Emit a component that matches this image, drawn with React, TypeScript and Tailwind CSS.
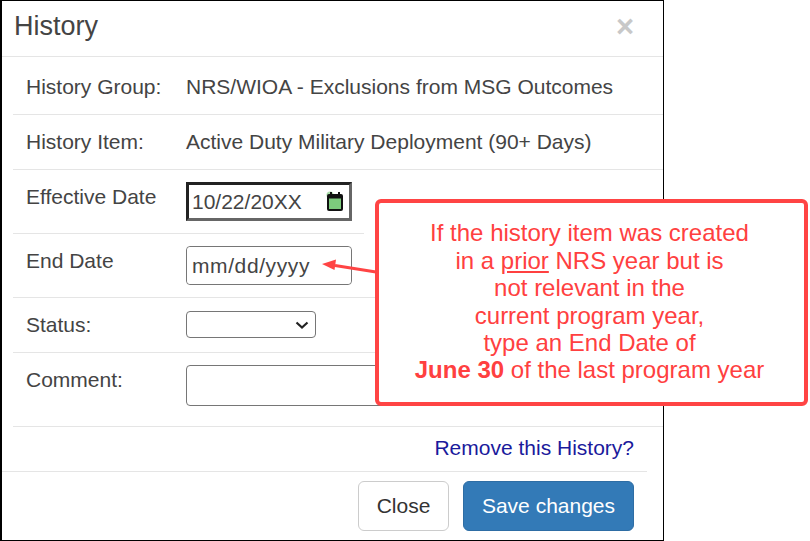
const inputBase = "block w-full h-full bg-white text-[21px] text-[#444] outline-none font-['Liberation_Sans',Arial,sans-serif]";

const Row = ({ label, children, className = "" }: { label: string; children: React.ReactNode; className?: string }) => (
  <div className={`flex border-b border-[#e5e5e5] pl-[13px] ${className}`}>
    <div className="w-[160px] shrink-0 leading-[30px]">{label}</div>
    {children}
  </div>
);

const CalendarIcon = () => (
  <svg width="18" height="21" viewBox="0 0 18 21" className="absolute right-[5px] top-[6px]">
    <circle cx="4" cy="4" r="3.5" fill="#a8dca8" />
    <rect x="1" y="3" width="16" height="17" rx="2" fill="#111" />
    <rect x="4" y="1" width="2" height="4" fill="#111" />
    <rect x="12" y="1" width="2" height="4" fill="#111" />
    <rect x="3" y="7.5" width="12" height="10.5" fill="#7ccb7c" />
  </svg>
);

export default function App() {
  return (
    <div className="relative w-[810px] h-[541px] bg-white overflow-hidden font-['Liberation_Sans',Arial,sans-serif] text-[21px] text-[#444]">
      {/* Modal */}
      <div className="w-[664px] h-[541px] border border-l-2 border-black">
        <div className="flex justify-between h-[56px] border-b border-[#e5e5e5] pl-[12px] pr-[29px]">
          <h4 className="text-[27px] leading-[50px] text-[#444]">History</h4>
          <span className="text-[31px] font-bold leading-[52px] text-[#c8c8c8]">×</span>
        </div>

        <div className="flex items-center h-[58px] pt-[2px] border-b border-[#e5e5e5] ml-[11px] pl-[13px]">
          <div className="w-[160px] shrink-0">History Group:</div>
          <div>NRS/WIOA - Exclusions from MSG Outcomes</div>
        </div>
        <div className="flex items-center h-[55px] border-b border-[#e5e5e5] ml-[11px] pl-[13px]">
          <div className="w-[160px] shrink-0">History Item:</div>
          <div>Active Duty Military Deployment (90+ Days)</div>
        </div>

        <div className="ml-[11px]">
          <Row label="Effective Date" className="h-[64px] pt-[12px] w-[351px]">
            <div className="relative w-[166px] h-[39px] border-[3px] border-t-[#222] border-l-[#222] border-r-[#666] border-b-[#666]">
              <input readOnly value="10/22/20XX" className={`${inputBase} pl-[3px] pr-[30px]`} />
              <CalendarIcon />
            </div>
          </Row>
          <Row label="End Date" className="h-[64px] pt-[12px]">
            <div className="w-[166px] h-[39px] border border-[#767676] rounded-[4px]">
              <input readOnly value="mm/dd/yyyy" className={`${inputBase} rounded-[4px] pl-[5px] tracking-[0.6px]`} />
            </div>
          </Row>
          <Row label="Status:" className="h-[55px] pt-[12px]">
            <div className="relative w-[130px] h-[27px] mt-px">
              <select className="appearance-none block w-full h-full border border-[#767676] rounded-[4px] bg-white text-[16px] text-black">
                <option></option>
              </select>
              <svg width="14" height="8" viewBox="0 0 14 8" className="absolute left-[109px] top-[10px]">
                <path d="M1.5 1.5 L7 6.5 L12.5 1.5" stroke="#222" strokeWidth="2.2" fill="none" />
              </svg>
            </div>
          </Row>
          <Row label="Comment:" className="h-[74px] pt-[12px]">
            <textarea readOnly className="w-[452px] h-[41px] border border-[#767676] rounded-[4px] resize-none outline-none" />
          </Row>
        </div>

        <div className="flex items-center justify-end h-[45px] w-[645px] pr-[13px] pb-[3px] border-b border-[#e5e5e5]">
          <a className="text-[#1a1a9c]">Remove this History?</a>
        </div>

        <div className="flex justify-end gap-[14px] w-[645px] pr-[13px] pt-[9px]">
          <button className="w-[91px] h-[50px] bg-white border border-[#ccc] rounded-[6px] text-[#333]">Close</button>
          <button className="w-[171px] h-[50px] bg-[#337ab7] border border-[#2e6da4] rounded-[6px] text-white">Save changes</button>
        </div>
      </div>

      {/* Callout */}
      <div className="absolute left-[375px] top-[199px] w-[433px] h-[207px] flex flex-col items-center justify-center pr-[4px] pb-[2px] border-4 border-[#ff4444] rounded-[6px] bg-white text-[24px] leading-[27.4px] text-[#ff4040]">
        <div>If the history item was created</div>
        <div>in a <span className="underline">prior</span> NRS year but is</div>
        <div>not relevant in the</div>
        <div>current program year,</div>
        <div>type an End Date of</div>
        <div><b>June 30</b> of the last program year</div>
      </div>

      {/* Arrow */}
      <svg width="56" height="16" viewBox="0 0 56 16" className="absolute left-[321px] top-[258px]">
        <path d="M55 14 L14 7.5" stroke="#ff4444" strokeWidth="3" fill="none" />
        <path d="M1 6 L15 1.5 L13.5 12 Z" fill="#ff4444" />
      </svg>
    </div>
  );
}
